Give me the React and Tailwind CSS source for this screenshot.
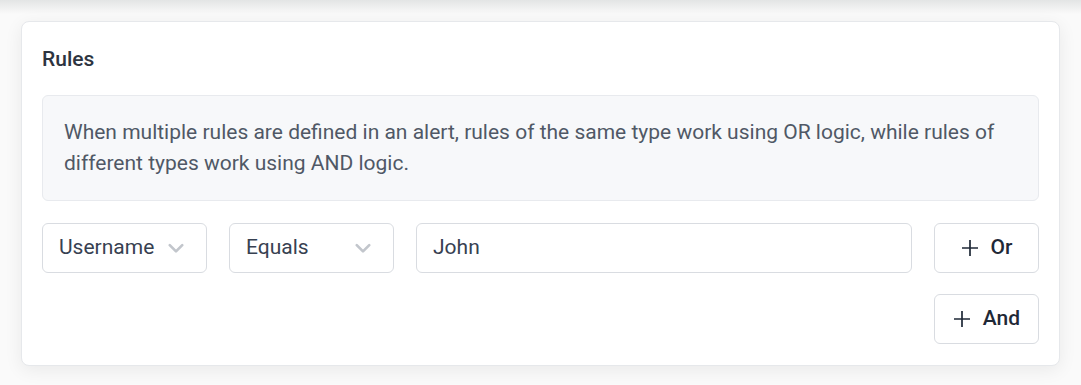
import React from 'react'

const Chevron = () => (
    <svg width="20" height="20" viewBox="0 0 24 24" fill="none" stroke="#c2c6cc" strokeWidth="3.2" strokeLinecap="round" strokeLinejoin="round">
        <path d="M4.5 8.5l7.5 7.5 7.5-7.5" />
    </svg>
)

const Plus = () => (
    <svg width="18" height="18" viewBox="0 0 18 18" fill="none" stroke="#1f2937" strokeWidth="1.7">
        <path d="M9 1v16M1 9h16" />
    </svg>
)

const SelectBox = ({ value }) => (
    <div className="w-[165px] h-[50px] flex items-center justify-between pl-4 pr-5 border border-[#d9dce1] rounded-md bg-white text-[21px] text-[#374151]">
        <span>{value}</span>
        <Chevron />
    </div>
)

const App = () => {
    return (
        <div className="w-[1081px] h-[385px] bg-[#fafafa] overflow-hidden" style={{ fontFamily: 'Roboto, "Liberation Sans", sans-serif' }}>
            {/* shadow of card above */}
            <div className="h-[14px] bg-gradient-to-b from-[#e3e5e5] to-[#fafafa]" />

            <div className="px-[21px] pt-[7px]">
                <div className="bg-white border border-[#e6e8eb] rounded-lg shadow-[0_4px_18px_rgba(0,0,0,0.07)] px-5 pt-[25px] pb-[21px]">
                    <h2 className="text-[21px] font-medium text-[#2d3440] leading-6">Rules</h2>

                    {/* Info */}
                    <div className="mt-[24px] bg-[#f7f8fa] border border-[#e8eaee] rounded-md px-[21px] py-[21px] text-[21px] leading-[31px] text-[#505866]">
                        When multiple rules are defined in an alert, rules of the same type work using OR logic, while rules of different types work using AND logic.
                    </div>

                    {/* Rule row */}
                    <div className="flex items-center gap-[22px] mt-[22px]">
                        <SelectBox value="Username" />
                        <SelectBox value="Equals" />
                        <div className="flex-1 h-[50px] flex items-center px-4 border border-[#d9dce1] rounded-md text-[21px] text-[#374151]">
                            John
                        </div>
                        <button className="w-[105px] h-[50px] flex items-center justify-center gap-[12px] border border-[#d9dce1] rounded-md text-[21px] font-medium text-[#1f2937]">
                            <Plus />
                            Or
                        </button>
                    </div>

                    <div className="flex justify-end mt-[21px]">
                        <button className="w-[105px] h-[50px] flex items-center justify-center gap-[12px] border border-[#d9dce1] rounded-md text-[21px] font-medium text-[#1f2937]">
                            <Plus />
                            And
                        </button>
                    </div>
                </div>
            </div>
        </div>
    )
}

export default App
